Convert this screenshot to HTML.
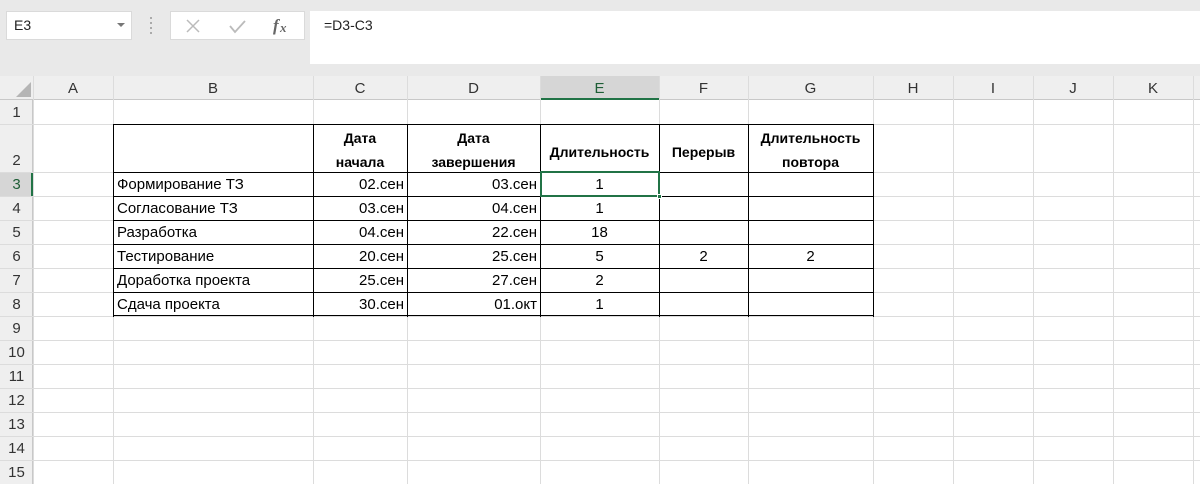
<!DOCTYPE html>
<html><head><meta charset="utf-8"><style>
*{margin:0;padding:0;box-sizing:border-box}
body{width:1200px;height:484px;overflow:hidden;background:#fff;position:relative;font-family:"Liberation Sans",sans-serif;color:#000}
div{position:absolute}
.v{width:1px;background:#dcdcdc;top:76px;bottom:0}
.h{height:1px;background:#dcdcdc;left:0;right:0}
.bv{width:1px;background:#000;top:124px;height:193px}
.bh{height:1px;background:#000;left:113px;width:761px}
.ch{top:77px;height:24px;line-height:24px;text-align:center;font-size:15px;color:#333}
.rh{left:0;width:33px;text-align:center;font-size:15px;color:#333;line-height:24px;height:24px;margin-top:1px}
.t{font-size:15px;height:24px;line-height:24px;white-space:nowrap;margin-top:1px}
.b{font-size:14px;font-weight:bold;text-align:center;line-height:24px;margin-top:2px}
</style></head><body>
<div style="left:0;top:0;width:1200px;height:76px;background:#e9e9e9"></div>
<div style="left:6px;top:11px;width:126px;height:29px;background:#fff;border:1px solid #dadada;font-size:14px;line-height:27px;padding-left:7px;color:#222">E3</div>
<div style="left:117px;top:23px;width:0;height:0;border-left:4px solid transparent;border-right:4px solid transparent;border-top:4px solid #777"></div>
<div style="left:150px;top:17px;width:2px;height:18px;background:repeating-linear-gradient(#aaa 0 2px,transparent 2px 5px)"></div>
<div style="left:170px;top:11px;width:135px;height:29px;background:#fff;border:1px solid #dadada"></div>
<svg style="position:absolute;left:184px;top:17px" width="110" height="18"><path d="M3 3l12 12M15 3L3 15" stroke="#bbb" stroke-width="1.5" fill="none"/><path d="M46 9l5 6 10-11" stroke="#bbb" stroke-width="1.8" fill="none"/><text x="89" y="14" font-family="Liberation Serif" font-style="italic" font-weight="bold" font-size="17" fill="#666">f</text><text x="96" y="15" font-family="Liberation Serif" font-style="italic" font-weight="bold" font-size="13" fill="#666">x</text></svg>
<div style="left:310px;top:11px;width:890px;height:53px;background:#fff"></div>
<div style="left:324px;top:17px;font-size:14px;color:#222">=D3-C3</div>
<div style="left:0;top:76px;width:1200px;height:24px;background:#efefef;border-bottom:1px solid #c8c8c8"></div>
<div style="left:0;top:100px;width:33px;height:384px;background:#efefef;border-right:1px solid #c8c8c8"></div>
<svg style="position:absolute;left:16px;top:82px" width="15" height="15"><path d="M15 0V15H0Z" fill="#b5b5b5"/></svg>
<div style="left:540px;top:76px;width:119px;height:24px;background:#d6d6d6;border-bottom:2px solid #217346"></div>
<div style="left:0;top:172px;width:33px;height:24px;background:#d6d6d6;border-right:2px solid #217346"></div>
<div class="v" style="left:33px"></div><div class="v" style="left:113px"></div><div class="v" style="left:313px"></div><div class="v" style="left:407px"></div><div class="v" style="left:540px"></div><div class="v" style="left:659px"></div><div class="v" style="left:748px"></div><div class="v" style="left:873px"></div><div class="v" style="left:953px"></div><div class="v" style="left:1033px"></div><div class="v" style="left:1113px"></div><div class="v" style="left:1193px"></div>
<div class="h" style="top:124px"></div><div class="h" style="top:172px"></div><div class="h" style="top:196px"></div><div class="h" style="top:220px"></div><div class="h" style="top:244px"></div><div class="h" style="top:268px"></div><div class="h" style="top:292px"></div><div class="h" style="top:316px"></div><div class="h" style="top:340px"></div><div class="h" style="top:364px"></div><div class="h" style="top:388px"></div><div class="h" style="top:412px"></div><div class="h" style="top:436px"></div><div class="h" style="top:460px"></div>
<div class="ch" style="left:33px;width:80px">A</div><div class="ch" style="left:113px;width:200px">B</div><div class="ch" style="left:313px;width:94px">C</div><div class="ch" style="left:407px;width:133px">D</div><div class="ch" style="left:540px;width:119px;color:#1e5e36">E</div><div class="ch" style="left:659px;width:89px">F</div><div class="ch" style="left:748px;width:125px">G</div><div class="ch" style="left:873px;width:80px">H</div><div class="ch" style="left:953px;width:80px">I</div><div class="ch" style="left:1033px;width:80px">J</div><div class="ch" style="left:1113px;width:80px">K</div>
<div class="rh" style="top:100px">1</div><div class="rh" style="top:148px">2</div><div class="rh" style="top:172px;color:#1e5e36">3</div><div class="rh" style="top:196px">4</div><div class="rh" style="top:220px">5</div><div class="rh" style="top:244px">6</div><div class="rh" style="top:268px">7</div><div class="rh" style="top:292px">8</div><div class="rh" style="top:316px">9</div><div class="rh" style="top:340px">10</div><div class="rh" style="top:364px">11</div><div class="rh" style="top:388px">12</div><div class="rh" style="top:412px">13</div><div class="rh" style="top:436px">14</div><div class="rh" style="top:460px">15</div>
<div style="left:114px;top:125px;width:759px;height:191px;background:#fff"></div>
<div class="bh" style="top:124px"></div><div class="bh" style="top:172px"></div><div class="bh" style="top:196px"></div><div class="bh" style="top:220px"></div><div class="bh" style="top:244px"></div><div class="bh" style="top:268px"></div><div class="bh" style="top:292px"></div><div class="bh" style="top:315px"></div>
<div class="bv" style="left:113px"></div><div class="bv" style="left:313px"></div><div class="bv" style="left:407px"></div><div class="bv" style="left:540px"></div><div class="bv" style="left:659px"></div><div class="bv" style="left:748px"></div><div class="bv" style="left:873px"></div>
<div class="b" style="left:313px;top:124px;width:94px">Дата<br>начала</div>
<div class="b" style="left:407px;top:124px;width:133px">Дата<br>завершения</div>
<div class="b" style="left:540px;top:138px;width:119px">Длительность</div>
<div class="b" style="left:659px;top:138px;width:89px">Перерыв</div>
<div class="b" style="left:748px;top:124px;width:125px">Длительность<br>повтора</div>
<div class="t" style="left:117px;top:172px">Формирование ТЗ</div><div class="t" style="left:117px;top:196px">Согласование ТЗ</div><div class="t" style="left:117px;top:220px">Разработка</div><div class="t" style="left:117px;top:244px">Тестирование</div><div class="t" style="left:117px;top:268px">Доработка проекта</div><div class="t" style="left:117px;top:292px">Сдача проекта</div>
<div class="t" style="left:313px;width:91px;text-align:right;top:172px">02.сен</div><div class="t" style="left:313px;width:91px;text-align:right;top:196px">03.сен</div><div class="t" style="left:313px;width:91px;text-align:right;top:220px">04.сен</div><div class="t" style="left:313px;width:91px;text-align:right;top:244px">20.сен</div><div class="t" style="left:313px;width:91px;text-align:right;top:268px">25.сен</div><div class="t" style="left:313px;width:91px;text-align:right;top:292px">30.сен</div>
<div class="t" style="left:407px;width:130px;text-align:right;top:172px">03.сен</div><div class="t" style="left:407px;width:130px;text-align:right;top:196px">04.сен</div><div class="t" style="left:407px;width:130px;text-align:right;top:220px">22.сен</div><div class="t" style="left:407px;width:130px;text-align:right;top:244px">25.сен</div><div class="t" style="left:407px;width:130px;text-align:right;top:268px">27.сен</div><div class="t" style="left:407px;width:130px;text-align:right;top:292px">01.окт</div>
<div class="t" style="left:540px;width:119px;text-align:center;top:172px">1</div><div class="t" style="left:540px;width:119px;text-align:center;top:196px">1</div><div class="t" style="left:540px;width:119px;text-align:center;top:220px">18</div><div class="t" style="left:540px;width:119px;text-align:center;top:244px">5</div><div class="t" style="left:540px;width:119px;text-align:center;top:268px">2</div><div class="t" style="left:540px;width:119px;text-align:center;top:292px">1</div>
<div class="t" style="left:659px;width:89px;text-align:center;top:244px">2</div><div class="t" style="left:748px;width:125px;text-align:center;top:244px">2</div>
<div style="left:540px;top:171px;width:120px;height:26px;border:2px solid #217346"></div>
<div style="left:657px;top:194px;width:5px;height:5px;background:#217346;border:1px solid #fff"></div>
</body></html>
